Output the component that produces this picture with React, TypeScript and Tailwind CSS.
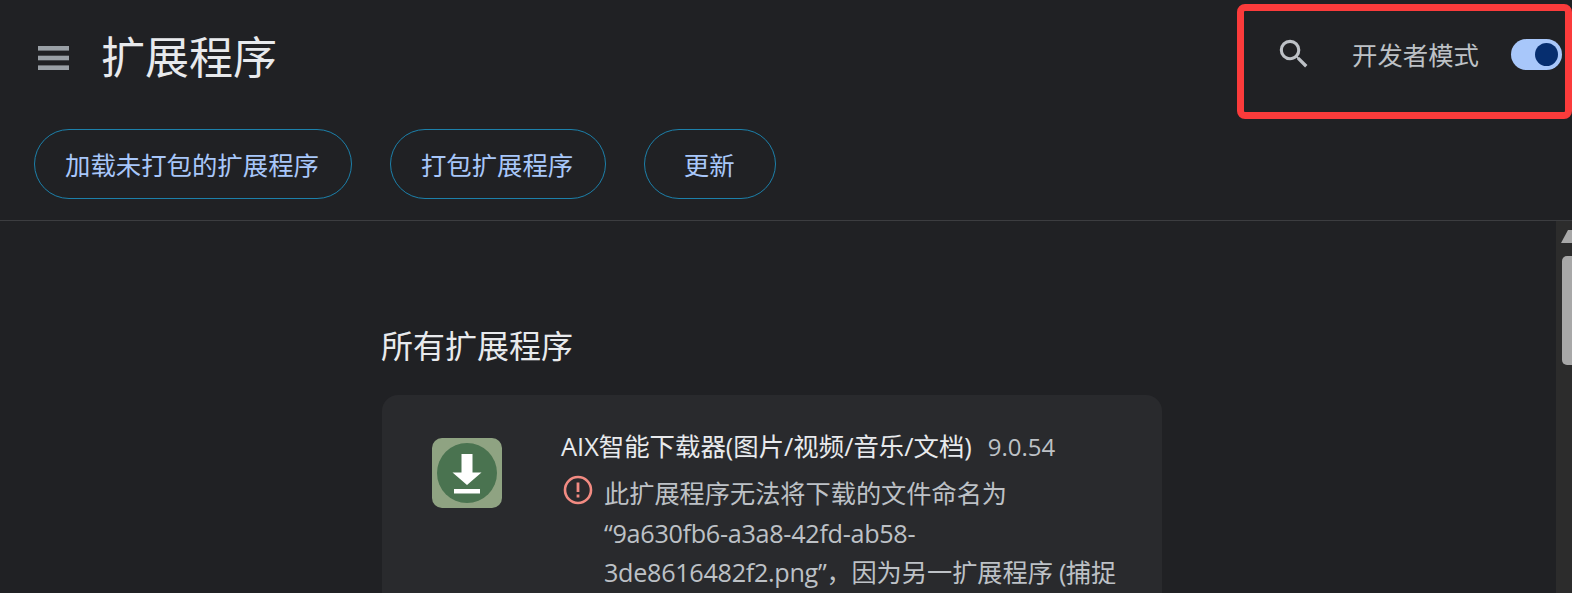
const font = "font-['Open_Sans','Noto_Sans_CJK_SC',sans-serif]";

function PillButton({ label, className = "" }: { label: string; className?: string }) {
  return (
    <button className={`h-[70px] px-[31px] pt-[3px] rounded-full border border-[#1c80aa] text-[25.4px] leading-none text-[#a8c7fa] ${className}`}>
      <span className="-ml-[1px] mr-[1px]">{label}</span>
    </button>
  );
}

function ExtensionIcon() {
  return (
    <div className="w-[70px] h-[70px] rounded-[10px] bg-[#8fa382] flex items-center justify-center shrink-0">
      <svg width="60" height="60" viewBox="0 0 60 60">
        <circle cx="30" cy="30" r="30" fill="#4a7350" />
        <path d="M24.5 11h11v18.5h9L30 42 15.5 29.5h9z" fill="#fff" />
        <rect x="17" y="46" width="26" height="4.5" fill="#fff" />
      </svg>
    </div>
  );
}

export default function App() {
  return (
    <div className={`relative h-[593px] w-full overflow-hidden flex flex-col bg-[#202124] ${font}`}>
      <header className="h-[221px] shrink-0 border-b border-[#3c3d40] flex flex-col">
        <div className="flex items-center pl-[38px] pt-[16px] h-[100px]">
          <svg width="31" height="24" viewBox="0 0 31 24" fill="#9aa0a6" className="shrink-0">
            <rect y="0" width="31" height="4.6" />
            <rect y="9.7" width="31" height="4.6" />
            <rect y="19.4" width="31" height="4.6" />
          </svg>
          <h1 className="ml-[32px] -mt-[2px] text-[44px] leading-none text-[#e8eaed]">扩展程序</h1>
        </div>
        <div className="flex gap-[38px] pl-[34px] pt-[29px]">
          <PillButton label="加载未打包的扩展程序" />
          <PillButton label="打包扩展程序" />
          <PillButton label="更新" className="w-[132px] !px-0" />
        </div>
      </header>

      <div className="flex flex-1 min-h-0">
        <main className="flex-1 pl-[382px] pt-[101px]">
          <h2 className="-ml-[1px] text-[32px] leading-[48px] text-[#e8eaed]">所有扩展程序</h2>
          <section className="mt-[25px] w-[780px] h-[400px] rounded-t-[16px] bg-[#292a2d] flex pl-[50px] pt-[43px]">
            <ExtensionIcon />
            <div className="ml-[59px] w-[560px] -mt-[8px]">
              <div className="flex items-baseline leading-[32px] whitespace-nowrap">
                <span className="text-[25.4px] text-[#e8eaed]">AIX智能下载器(图片/视频/音乐/文档)</span>
                <span className="ml-[16px] text-[24px] text-[#bdc1c6]">9.0.54</span>
              </div>
              <div className="flex mt-[11px]">
                <svg width="30" height="30" viewBox="0 0 30 30" className="ml-[2px] mt-[1px] shrink-0">
                  <circle cx="15" cy="15" r="13" fill="none" stroke="#f28b82" strokeWidth="2.6" />
                  <rect x="13.6" y="7.5" width="2.8" height="9.5" fill="#f28b82" />
                  <rect x="13.6" y="19.5" width="2.8" height="3" fill="#f28b82" />
                </svg>
                <p className="ml-[11px] text-[25.2px] leading-[39.5px] text-[#bdc1c6] whitespace-nowrap">
                  此扩展程序无法将下载的文件命名为
                  <br />
                  <span className="tracking-[-0.3px]">“9a630fb6-a3a8-42fd-ab58-</span>
                  <br />
                  <span className="tracking-[-0.3px]">3de8616482f2.png”，</span>因为另一扩展程序<span className="tracking-[-0.5px]"> (</span>捕捉
                </p>
              </div>
            </div>
          </section>
        </main>
        <div className="w-[16px] bg-[#2c2c2c] shrink-0 flex flex-col items-start">
          <svg width="11" height="13" viewBox="0 0 11 13" className="mt-[9px] ml-[5px]">
            <path d="M0 13 L7 0 H11 V13 Z" fill="#a8a8a8" />
          </svg>
          <div className="mt-[13px] ml-[6px] w-[10px] h-[109px] rounded-l-[5px] bg-[#a8a8a8]" />
        </div>
      </div>

      {/* red annotation over the toolbar */}
      <div className="absolute left-[1237px] top-[4px] w-[335px] h-[115px] rounded-[8px] border-[7px] border-[#fb3b3b] pointer-events-none" />
      <div className="absolute left-[1275px] top-[35px] flex items-center">
        <svg width="38" height="38" viewBox="0 0 24 24" fill="#bdc1c6">
          <path d="M15.5 14h-.79l-.28-.27A6.47 6.47 0 0 0 16 9.5 6.5 6.5 0 1 0 9.5 16c1.61 0 3.09-.59 4.23-1.57l.27.28v.79l5 4.99L20.49 19l-4.99-5zm-6 0C7.01 14 5 11.99 5 9.5S7.01 5 9.5 5 14 7.01 14 9.5 11.99 14 9.5 14z" />
        </svg>
        <span className="ml-[39px] mt-[4px] text-[25.4px] leading-none text-[#bdc1c6]">开发者模式</span>
        <div className="ml-[32px] w-[51px] h-[31px] rounded-full bg-[#a8c7fa] flex items-center justify-end pr-[4px]">
          <div className="w-[23px] h-[23px] rounded-full bg-[#062e6f]" />
        </div>
      </div>
    </div>
  );
}
